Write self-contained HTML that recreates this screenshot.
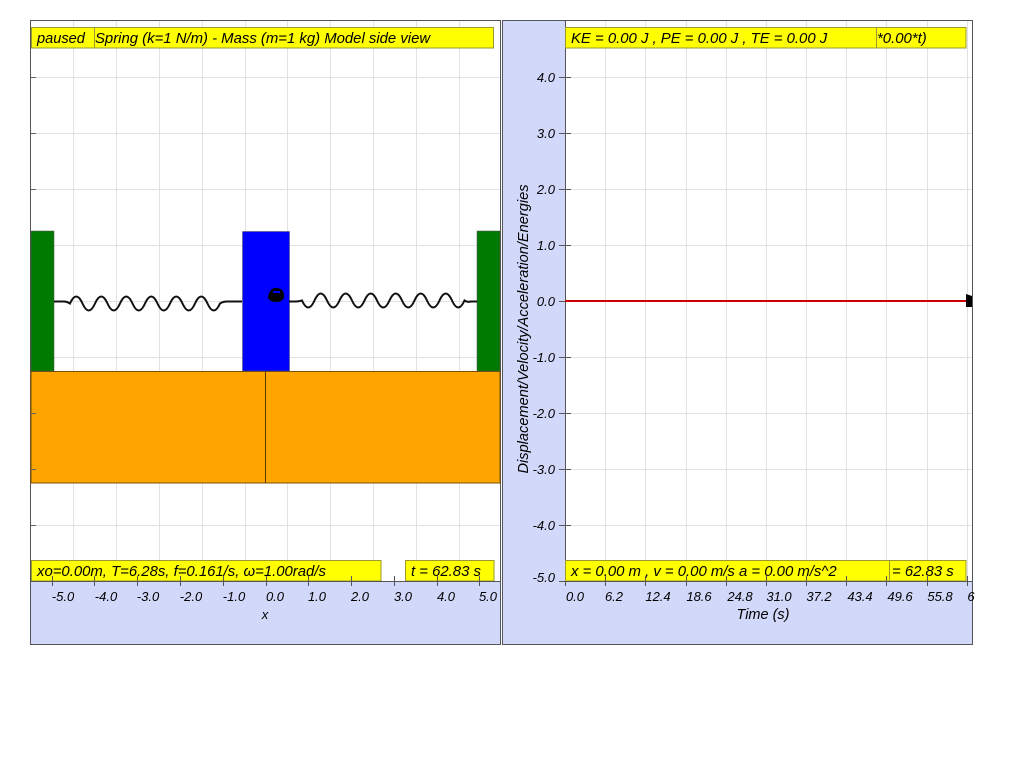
<!DOCTYPE html>
<html><head><meta charset="utf-8"><style>
html,body{margin:0;padding:0;background:#fff;width:1024px;height:768px;overflow:hidden}
svg text{font-family:"Liberation Sans",sans-serif;font-style:italic}
</style></head><body>
<svg width="1024" height="768" viewBox="0 0 1024 768" xmlns="http://www.w3.org/2000/svg">
<rect x="30.5" y="20.5" width="470" height="624" fill="#d2d8fa" stroke="#555"/>
<rect x="31" y="21" width="469" height="560" fill="#fff"/>
<g stroke="#e2e2e2" stroke-width="1">
<line x1="73.5" y1="21" x2="73.5" y2="581"/><line x1="116.5" y1="21" x2="116.5" y2="581"/>
<line x1="159.5" y1="21" x2="159.5" y2="581"/><line x1="202.5" y1="21" x2="202.5" y2="581"/>
<line x1="245.5" y1="21" x2="245.5" y2="581"/><line x1="287.5" y1="21" x2="287.5" y2="581"/>
<line x1="330.5" y1="21" x2="330.5" y2="581"/><line x1="373.5" y1="21" x2="373.5" y2="581"/>
<line x1="416.5" y1="21" x2="416.5" y2="581"/><line x1="459.5" y1="21" x2="459.5" y2="581"/>
<line x1="31" y1="77.5" x2="500" y2="77.5"/><line x1="31" y1="133.5" x2="500" y2="133.5"/>
<line x1="31" y1="189.5" x2="500" y2="189.5"/><line x1="31" y1="245.5" x2="500" y2="245.5"/>
<line x1="31" y1="301.5" x2="500" y2="301.5"/><line x1="31" y1="357.5" x2="500" y2="357.5"/>
<line x1="31" y1="413.5" x2="500" y2="413.5"/><line x1="31" y1="469.5" x2="500" y2="469.5"/>
<line x1="31" y1="525.5" x2="500" y2="525.5"/>
</g>
<g stroke="#666"><line x1="31" y1="77.5" x2="36" y2="77.5"/><line x1="31" y1="133.5" x2="36" y2="133.5"/><line x1="31" y1="189.5" x2="36" y2="189.5"/><line x1="31" y1="245.5" x2="36" y2="245.5"/><line x1="31" y1="525.5" x2="36" y2="525.5"/></g>
<rect x="31" y="371.5" width="469" height="111.5" fill="#ffa500" stroke="#7a5000"/>
<line x1="265.5" y1="371" x2="265.5" y2="483" stroke="#5a3a00"/>
<g stroke="#666"><line x1="31" y1="413.5" x2="36" y2="413.5"/><line x1="31" y1="469.5" x2="36" y2="469.5"/></g>
<rect x="31" y="231" width="23" height="140" fill="#007a00" stroke="#555" stroke-width="0.5"/>
<rect x="477" y="231" width="23" height="140" fill="#007a00" stroke="#555" stroke-width="0.5"/>
<rect x="242.5" y="231.5" width="47" height="139.5" fill="#0000ff" stroke="#555" stroke-width="0.5"/>
<path d="M54 301.5 H64 q3 0 6 2 q6.25 -14 12.5 0 t12.5 0 t12.5 0 t12.5 0 t12.5 0 t12.5 0 t12.5 0 t12.5 0 t12.5 0 t12.5 0 t12.5 0 t12.5 0 q3 -2 7 -2 H242" fill="none" stroke="#111" stroke-width="2"/>
<path d="M289 301.5 H296 q3 0 6 -1 q6.25 14 12.5 0 t12.5 0 t12.5 0 t12.5 0 t12.5 0 t12.5 0 t12.5 0 t12.5 0 t12.5 0 t12.5 0 t12.5 0 t12.5 0 t12.5 0 q3 2 6 1 H477" fill="none" stroke="#111" stroke-width="2"/>
<path d="M268 298 q1 -10 8 -10 q8 0 8 8 q0 6 -8 6 q-6 0 -8 -4 z" fill="#000"/>
<rect x="273" y="291" width="7" height="2" fill="#0000ff"/>
<rect x="31.5" y="27.5" width="462" height="20.5" fill="#ffff00" stroke="#9a9a30"/>
<line x1="94.5" y1="27.5" x2="94.5" y2="48" stroke="#9a9a30"/>
<text x="37" y="43" font-size="14.6">paused</text>
<text x="95" y="43" font-size="14.9">Spring (k=1 N/m) - Mass (m=1 kg) Model side view</text>
<rect x="31.5" y="560.5" width="349.5" height="20.5" fill="#ffff00" stroke="#9a9a30"/>
<text x="37" y="576" font-size="14.9">xo=0.00m, T=6.28s, f=0.161/s, ω=1.00rad/s</text>
<rect x="405.5" y="560.5" width="88.5" height="20.5" fill="#ffff00" stroke="#9a9a30"/>
<text x="411" y="576" font-size="14.9">t = 62.83 s</text>
<line x1="31" y1="581.5" x2="500" y2="581.5" stroke="#555"/>
<g stroke="#555"><line x1="52.5" y1="576" x2="52.5" y2="586"/><line x1="94.5" y1="576" x2="94.5" y2="586"/><line x1="137.5" y1="576" x2="137.5" y2="586"/><line x1="180.5" y1="576" x2="180.5" y2="586"/><line x1="223.5" y1="576" x2="223.5" y2="586"/><line x1="266.5" y1="576" x2="266.5" y2="586"/><line x1="308.5" y1="576" x2="308.5" y2="586"/><line x1="351.5" y1="576" x2="351.5" y2="586"/><line x1="394.5" y1="576" x2="394.5" y2="586"/><line x1="437.5" y1="576" x2="437.5" y2="586"/><line x1="479.5" y1="576" x2="479.5" y2="586"/></g>
<g font-size="13" text-anchor="middle">
<text x="63" y="601">-5.0</text><text x="106" y="601">-4.0</text><text x="148" y="601">-3.0</text><text x="191" y="601">-2.0</text><text x="234" y="601">-1.0</text><text x="275" y="601">0.0</text><text x="317" y="601">1.0</text><text x="360" y="601">2.0</text><text x="403" y="601">3.0</text><text x="446" y="601">4.0</text><text x="488" y="601">5.0</text>
<text x="265" y="619">x</text>
</g>
<rect x="502.5" y="20.5" width="470" height="624" fill="#d2d8fa" stroke="#555"/>
<rect x="565" y="21" width="407" height="560" fill="#fff"/>
<g stroke="#e2e2e2">
<line x1="605.5" y1="21" x2="605.5" y2="581"/><line x1="645.5" y1="21" x2="645.5" y2="581"/><line x1="686.5" y1="21" x2="686.5" y2="581"/><line x1="726.5" y1="21" x2="726.5" y2="581"/><line x1="766.5" y1="21" x2="766.5" y2="581"/><line x1="806.5" y1="21" x2="806.5" y2="581"/><line x1="846.5" y1="21" x2="846.5" y2="581"/><line x1="886.5" y1="21" x2="886.5" y2="581"/><line x1="927.5" y1="21" x2="927.5" y2="581"/><line x1="967.5" y1="21" x2="967.5" y2="581"/>
<line x1="565" y1="77.5" x2="972" y2="77.5"/><line x1="565" y1="133.5" x2="972" y2="133.5"/><line x1="565" y1="189.5" x2="972" y2="189.5"/><line x1="565" y1="245.5" x2="972" y2="245.5"/><line x1="565" y1="357.5" x2="972" y2="357.5"/><line x1="565" y1="413.5" x2="972" y2="413.5"/><line x1="565" y1="469.5" x2="972" y2="469.5"/><line x1="565" y1="525.5" x2="972" y2="525.5"/>
</g>
<line x1="565.5" y1="21" x2="565.5" y2="586" stroke="#555"/>
<g stroke="#555"><line x1="559" y1="77.5" x2="571" y2="77.5"/><line x1="559" y1="133.5" x2="571" y2="133.5"/><line x1="559" y1="189.5" x2="571" y2="189.5"/><line x1="559" y1="245.5" x2="571" y2="245.5"/><line x1="559" y1="301.5" x2="571" y2="301.5"/><line x1="559" y1="357.5" x2="571" y2="357.5"/><line x1="559" y1="413.5" x2="571" y2="413.5"/><line x1="559" y1="469.5" x2="571" y2="469.5"/><line x1="559" y1="525.5" x2="571" y2="525.5"/><line x1="559" y1="581.5" x2="972" y2="581.5"/></g>
<line x1="565" y1="301" x2="972" y2="301" stroke="#cc0000" stroke-width="2"/>
<path d="M966 294 L972 296 L972 307 L966 307 Z" fill="#000"/>
<g font-size="13" text-anchor="end">
<text x="555" y="82">4.0</text><text x="555" y="138">3.0</text><text x="555" y="194">2.0</text><text x="555" y="250">1.0</text><text x="555" y="306">0.0</text><text x="555" y="362">-1.0</text><text x="555" y="418">-2.0</text><text x="555" y="474">-3.0</text><text x="555" y="530">-4.0</text><text x="555" y="582">-5.0</text>
</g>
<text x="0" y="0" font-size="14.6" text-anchor="middle" transform="translate(528,329) rotate(-90)">Displacement/Velocity/Acceleration/Energies</text>
<rect x="565.5" y="27.5" width="400.5" height="20.5" fill="#ffff00" stroke="#9a9a30"/>
<line x1="876.5" y1="27.5" x2="876.5" y2="48" stroke="#9a9a30"/>
<text x="571" y="43" font-size="14.9">KE = 0.00 J , PE = 0.00 J , TE = 0.00 J</text>
<text x="877" y="43" font-size="14.9">*0.00*t)</text>
<rect x="565.5" y="560.5" width="400.5" height="20.5" fill="#ffff00" stroke="#9a9a30"/>
<line x1="889.5" y1="560.5" x2="889.5" y2="581" stroke="#9a9a30"/>
<text x="571" y="576" font-size="14.9">x = 0.00 m , v = 0.00 m/s a = 0.00 m/s^2</text>
<text x="892" y="576" font-size="14.9">= 62.83 s</text>
<line x1="565" y1="581.5" x2="972" y2="581.5" stroke="#555"/>
<g stroke="#555"><line x1="605.5" y1="576" x2="605.5" y2="586"/><line x1="645.5" y1="576" x2="645.5" y2="586"/><line x1="686.5" y1="576" x2="686.5" y2="586"/><line x1="726.5" y1="576" x2="726.5" y2="586"/><line x1="766.5" y1="576" x2="766.5" y2="586"/><line x1="806.5" y1="576" x2="806.5" y2="586"/><line x1="846.5" y1="576" x2="846.5" y2="586"/><line x1="886.5" y1="576" x2="886.5" y2="586"/><line x1="927.5" y1="576" x2="927.5" y2="586"/><line x1="967.5" y1="576" x2="967.5" y2="586"/></g>
<g font-size="13" text-anchor="middle">
<text x="575" y="601">0.0</text><text x="614" y="601">6.2</text><text x="658" y="601">12.4</text><text x="699" y="601">18.6</text><text x="740" y="601">24.8</text><text x="779" y="601">31.0</text><text x="819" y="601">37.2</text><text x="860" y="601">43.4</text><text x="900" y="601">49.6</text><text x="940" y="601">55.8</text><text x="971" y="601">6</text>
<text x="763" y="619" font-size="14.5">Time (s)</text>
</g>
</svg>
</body></html>
